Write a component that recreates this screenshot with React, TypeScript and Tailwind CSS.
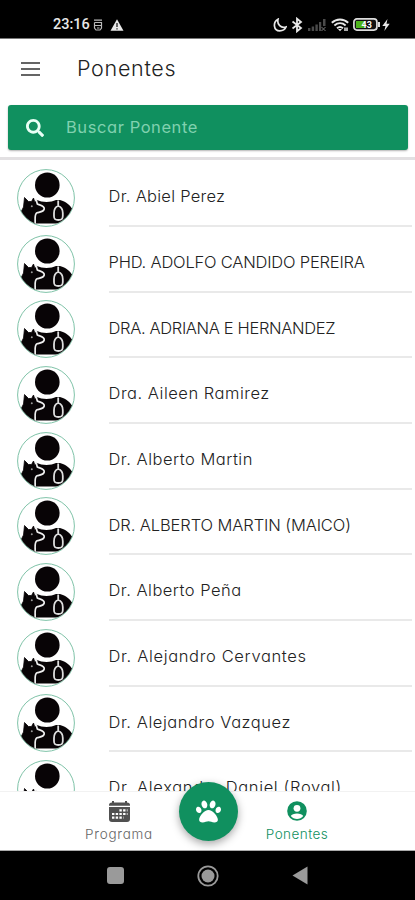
import { FaPaw, FaSearch } from "react-icons/fa";

const speakers = [
  { name: "Dr. Abiel Perez", tracking: "tracking-[0.27px]" },
  { name: "PHD. ADOLFO CANDIDO PEREIRA", tracking: "tracking-[-0.2px]" },
  { name: "DRA. ADRIANA E HERNANDEZ", tracking: "tracking-[-0.35px]" },
  { name: "Dra. Aileen Ramirez", tracking: "tracking-[0.52px]" },
  { name: "Dr. Alberto Martin", tracking: "tracking-[0.5px]" },
  { name: "DR. ALBERTO MARTIN (MAICO)", tracking: "tracking-[-0.1px]" },
  { name: "Dr. Alberto Peña", tracking: "tracking-[0.48px]" },
  { name: "Dr. Alejandro Cervantes", tracking: "tracking-[0.65px]" },
  { name: "Dr. Alejandro Vazquez", tracking: "tracking-[0.55px]" },
  { name: "Dr. Alexandro Daniel (Royal)", tracking: "tracking-[0.64px]" },
];

const Avatar = () => (
  <svg viewBox="0 0 58 58" className="h-[58px] w-[58px] shrink-0">
    <defs>
      <clipPath id="avatarClip">
        <circle cx="29" cy="29" r="28" />
      </clipPath>
    </defs>
    <circle cx="29" cy="29" r="28.4" fill="#fff" stroke="#7fc3a8" strokeWidth="1" />
    <ellipse cx="30.3" cy="16" rx="12.3" ry="12.6" fill="#080406" />
    <g clipPath="url(#avatarClip)">
      {/* Shoulders */}
      <path d="M20 31 C25 33.5 34 33.5 39 31 L43 31 C49 32.5 53 36 56 41 L48 54.5 H17 V40 Z" fill="#080406" />
      {/* Dog */}
      <path d="M19.5 31 V36.5 H26.5 V42 L19 44 L15 40 L17 34 Z" fill="#080406" />
      <path
        d="M7.5 28.5 L11.5 32.5 L14.5 32.5 L16.5 29 L18.3 34.5 L22 37 L26 38.5 L25 41.5 L20.5 43 L17.5 46 V54.5 H11 L3.5 44 L6.5 38 Z"
        fill="#080406"
        stroke="#080406"
        strokeWidth="0.8"
      />
      <path
        d="M19 30 L20.3 35 C23 36.3 27.7 36.5 27.2 40 C26.7 43 22.5 43 20 43.8 C17.3 45.3 18.2 49 18.2 54.5"
        fill="none"
        stroke="#eee"
        strokeWidth="1.7"
      />
      <circle cx="14.8" cy="37.3" r="1" fill="#999" />
      {/* Tag */}
      <path
        d="M41.2 31.5 V37 M41.2 37 C38.2 38 37 41 37 44 V47 C37 50.3 38.2 51 41.3 51 C44.4 51 45.8 50.3 45.8 47 V44 C45.8 41 44.4 38 41.2 37"
        fill="none"
        stroke="#ddd"
        strokeWidth="1.8"
      />
    </g>
  </svg>
);

const StatusBar = () => (
  <div className="flex h-[39px] shrink-0 items-center border-b border-[#777] bg-black pt-[11px] pl-[53px] text-[#e8e8e8]">
    <span className="w-[36px] font-[Roboto] text-[14.5px] font-medium whitespace-nowrap">23:16</span>
    <svg viewBox="0 0 10 12" className="ml-[4px] h-[12px] w-[10px]" fill="none" stroke="#bbb" strokeWidth="1.2">
      <path d="M1 1.2 H9 M1.5 3.5 H8.5 V9 L7 11 H3 L1.5 9 V3.5 M2 6.5 H8 M4 9 H6.5" />
    </svg>
    <svg viewBox="0 0 14 12" className="ml-[7px] h-[12px] w-[14px]">
      <path d="M7 0.3 L13.5 11.8 H0.5 Z" fill="#e8e8e8" />
      <path d="M7 4 V8 M7 9.2 V10.5" stroke="#222" strokeWidth="1.3" />
    </svg>
    <svg viewBox="0 0 14 14" className="ml-[149px] h-[14px] w-[14px]" fill="none" stroke="#e8e8e8" strokeWidth="1.7">
      <path d="M5 1.3 C-0.3 4 0.3 12.8 6.8 12.8 C9.8 12.8 12 11.3 13 9 C8 10.5 3.8 6.5 5 1.3 Z" />
    </svg>
    <svg viewBox="0 0 12 16" className="ml-[4px] h-[16px] w-[12px]" fill="none" stroke="#e8e8e8" strokeWidth="1.8">
      <path d="M1.5 4.5 L10 11 L6 14.3 V1.7 L10 5 L1.5 11.5" />
    </svg>
    <svg viewBox="0 0 18 12" className="ml-[5px] h-[12px] w-[18px]" fill="#4a4a4a">
      <path d="M0 9 H2.4 V12 H0 Z M3.7 7.5 H6.1 V12 H3.7 Z M7.4 5.5 H9.8 V12 H7.4 Z M11 3 H13.2 V12 H11 Z M15 0 H17.5 V7 H15 Z" />
      <path d="M13.5 8 L17.5 12 M17.5 8 L13.5 12" stroke="#777" />
    </svg>
    <svg viewBox="0 0 18 14" className="ml-[5px] h-[14px] w-[18px]" fill="none" stroke="#e8e8e8" strokeWidth="1.9">
      <path d="M0.8 4.8 C5.5 0.4 12.5 0.4 17.2 4.8 M3.4 7.5 C6.8 4.5 11.2 4.5 14.6 7.5 M6 10.2 C8 8.5 10 8.5 12 10.2" />
      <path d="M7 11 L9 13.3 L11 11 Z" fill="#e8e8e8" stroke="none" />
      <path d="M13 9.5 H17 V13 H13 Z" fill="#aaa" stroke="none" />
    </svg>
    <svg viewBox="0 0 27 13" className="ml-[4px] h-[13px] w-[27px]">
      <rect x="0.9" y="0.9" width="23" height="11.2" rx="3" fill="#111" stroke="#ddd" strokeWidth="1.7" />
      <path d="M3 3 H12 V10 H3 Z" fill="#4db51c" />
      <path d="M25 4 H27 V9 H25 Z" fill="#ddd" />
      <text x="8.5" y="9.8" fontSize="9" fontWeight="700" fontFamily="Roboto" fill="#fff">
        43
      </text>
    </svg>
    <svg viewBox="0 0 8 12" className="ml-[2px] h-[12px] w-[8px]">
      <path d="M5.5 0 L0.3 7 H3.5 L2.3 12 L7.7 4.8 H4.5 Z" fill="#e8e8e8" />
    </svg>
  </div>
);

const App = () => {
  return (
    <div className="flex h-[900px] w-[415px] flex-col overflow-hidden bg-white font-[Inter,sans-serif] font-light [font-feature-settings:'cv11']">
      <StatusBar />

      {/* Header */}
      <header className="shrink-0 border-b-[3px] border-[#e2e0e2] pb-[7px]">
        <div className="flex h-[66px] items-center pb-[7px] pl-[21px]">
          <svg viewBox="0 0 19 14" className="h-[14px] w-[19px]" stroke="#333" strokeWidth="1.7">
            <path d="M0 1 H19 M0 7 H19 M0 13 H19" />
          </svg>
          <h1 className="ml-[37px] text-[21.5px] tracking-[0.7px] text-[#222]">Ponentes</h1>
        </div>
        <div className="mr-[7px] ml-2 flex h-[45px] items-center rounded-[3px] bg-[#10905f] pl-[18px] shadow-[0_1px_2px_rgba(0,0,0,0.3)]">
          <FaSearch className="size-[18px] text-[#e9fff5]" />
          <span className="ml-[22px] text-[16.5px] font-normal tracking-[0.57px] text-[#80d1af]">Buscar Ponente</span>
        </div>
      </header>

      {/* Speakers */}
      <main className="min-h-0 flex-1 overflow-hidden pt-[1.5px]">
        {speakers.map(({ name, tracking }) => (
          <div key={name} className="flex h-[65.65px] items-end pl-[17px]">
            <Avatar />
            <div className="mr-[3px] ml-[33.5px] flex h-full flex-1 items-center border-b-2 border-[#e9e9e9] pt-[7px]">
              <span className={`text-[16.5px] whitespace-nowrap text-[#222] ${tracking}`}>{name}</span>
            </div>
          </div>
        ))}
      </main>

      {/* Tabs */}
      <nav className="relative flex h-[60px] shrink-0 border-t border-b border-[#f2f2f2] border-b-[#aaa] bg-white text-[13.5px]">
        <div className="ml-[79px] flex w-[80px] flex-col items-center pt-[9px] text-[#666]">
          <svg viewBox="0 0 21 21" className="h-[21px] w-[21px]" fill="#505050">
            <path d="M3 0 H5 V1.5 H16 V0 H18 V1.5 C20 1.5 21 2.5 21 4 V4.8 H0 V4 C0 2.5 1 1.5 3 1.5 Z" />
            <path d="M0 6 H21 V18 C21 20 20 21 18 21 H3 C1 21 0 20 0 18 Z" />
            <path
              d="M10.4 9.3 H18.5 M3 13 H18.5 M3 16.7 H14.5"
              stroke="#fff"
              strokeWidth="2.2"
              strokeDasharray="2.4 1.3"
            />
          </svg>
          <span className="mt-[2px] tracking-[0.75px]">Programa</span>
        </div>
        <div className="ml-[98px] flex w-[80px] flex-col items-center pt-[9px] text-[#10905f]">
          <svg viewBox="0 0 20 20" className="h-[20px] w-[20px]">
            <circle cx="10" cy="10" r="9.8" fill="#10905f" />
            <circle cx="10" cy="7.3" r="3.4" fill="#fff" />
            <path d="M3.8 15 C5 11.5 15 11.5 16.2 15 C13.5 19 6.5 19 3.8 15 Z" fill="#fff" />
          </svg>
          <span className="mt-[3px] tracking-[0.45px]">Ponentes</span>
        </div>
        <div className="absolute top-[-10px] left-[179px] flex size-[59px] items-center justify-center rounded-full bg-[#10905f] shadow-[0_3px_8px_rgba(0,0,0,0.35)]">
          <FaPaw className="size-[25px] text-white" />
        </div>
      </nav>

      {/* Android navigation */}
      <div className="flex h-[49px] shrink-0 items-center bg-black pl-[107px]">
        <div className="size-[17px] rounded-[3px] bg-[#9a9a9a]" />
        <svg viewBox="0 0 22 22" className="ml-[73px] h-[22px] w-[22px]">
          <circle cx="11" cy="11" r="9.7" fill="none" stroke="#9a9a9a" strokeWidth="1.8" />
          <circle cx="11" cy="11" r="6.5" fill="#9a9a9a" />
        </svg>
        <svg viewBox="0 0 16 19" className="ml-[73px] h-[19px] w-[16px]" fill="#9a9a9a">
          <path d="M0.5 9.5 L15.5 0.5 V18.5 Z" />
        </svg>
      </div>
    </div>
  );
};

export default App;
